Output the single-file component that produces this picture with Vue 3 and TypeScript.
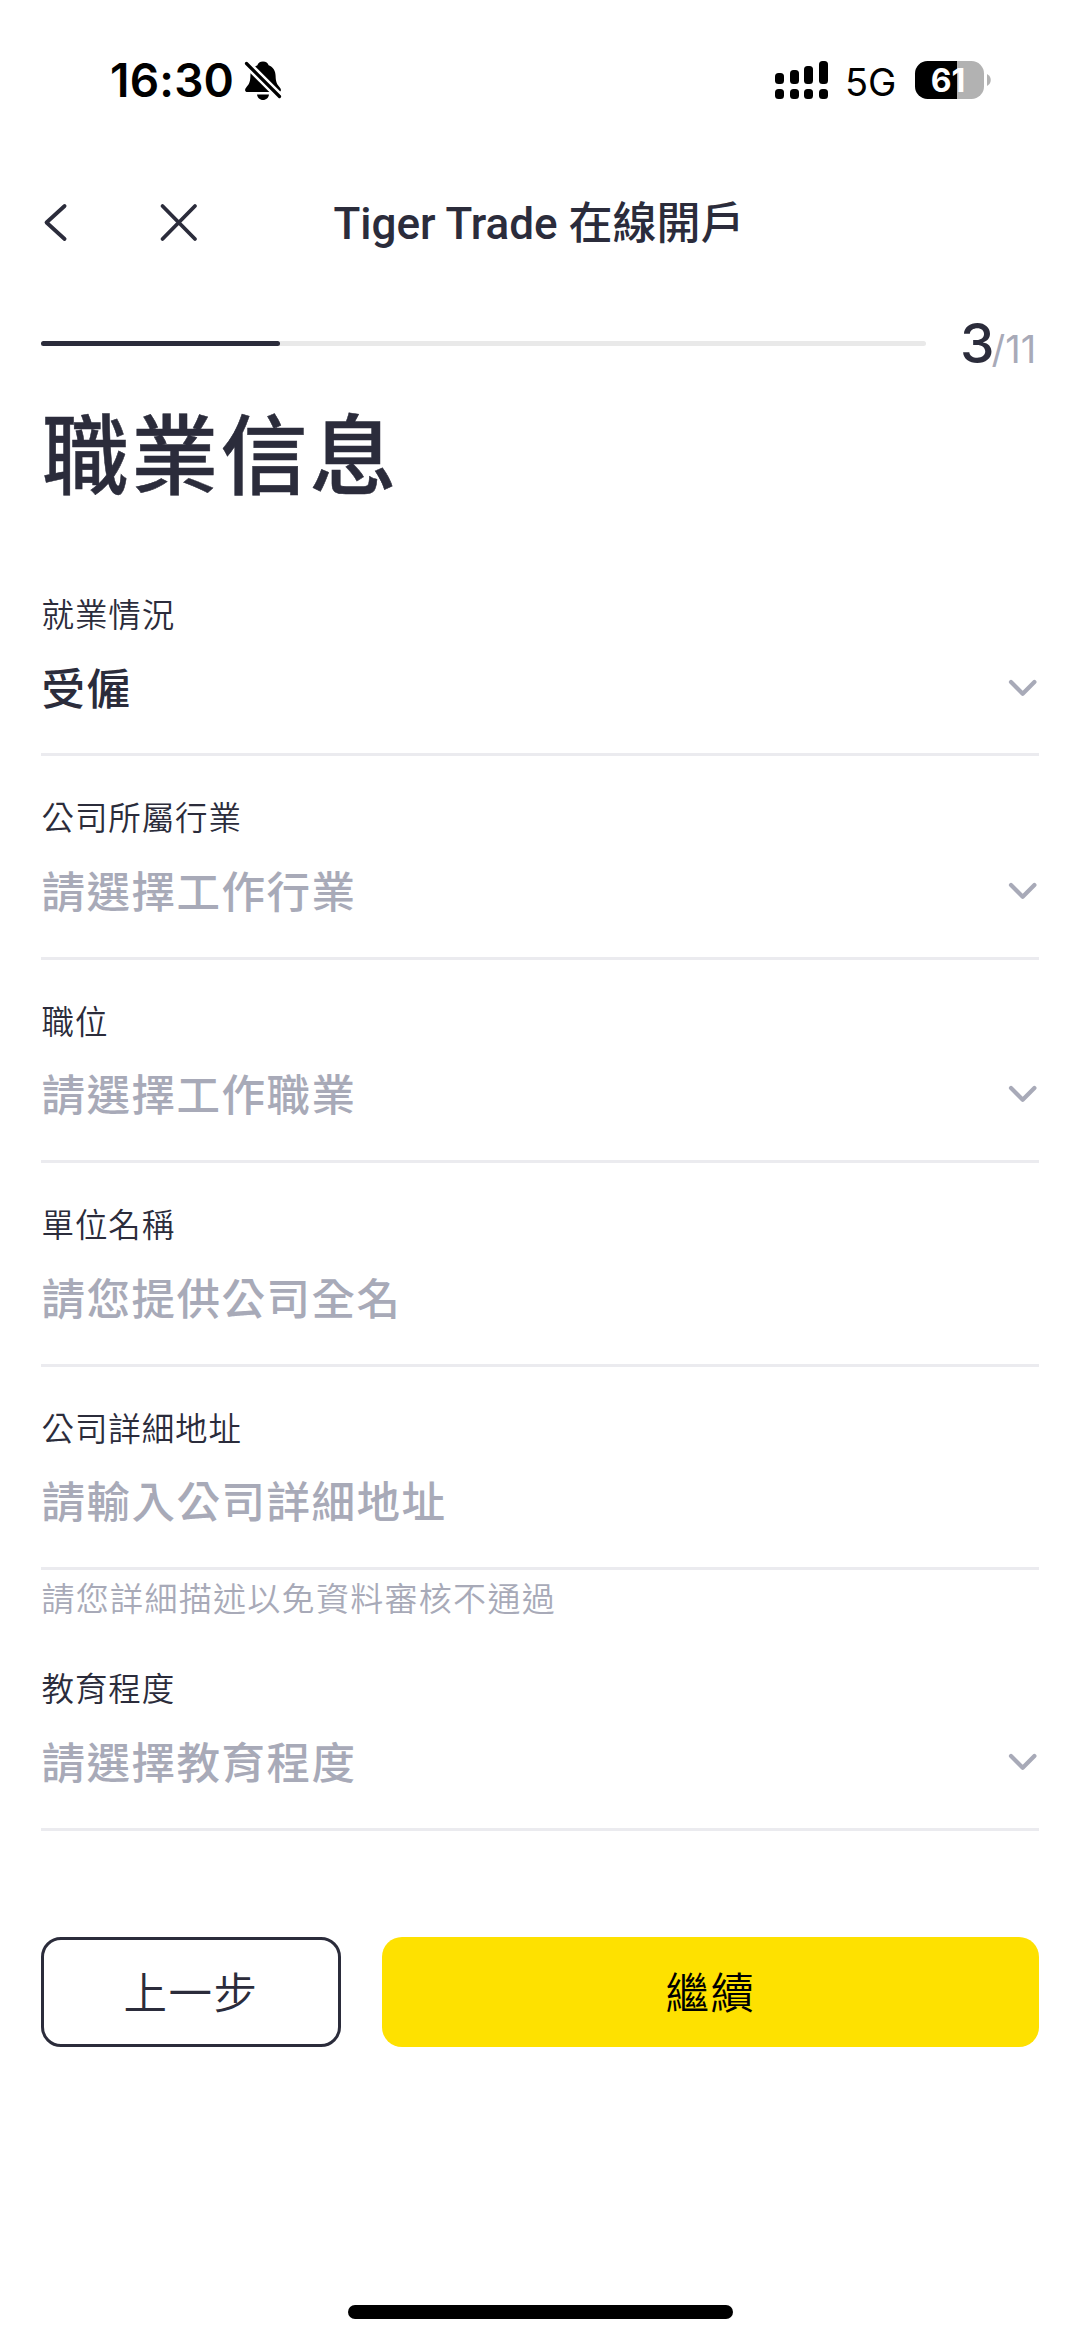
<script setup lang="ts">
import { ref } from 'vue'

interface Field {
  id: string
  label: string
  value: string
  placeholder: string
  select: boolean
  hint?: string
}

const step = ref(3)
const total = 11

const fields = ref<Field[]>([
  { id: 'status', label: '就業情況', value: '受僱', placeholder: '', select: true },
  { id: 'industry', label: '公司所屬行業', value: '', placeholder: '請選擇工作行業', select: true },
  { id: 'position', label: '職位', value: '', placeholder: '請選擇工作職業', select: true },
  { id: 'company', label: '單位名稱', value: '', placeholder: '請您提供公司全名', select: false },
  {
    id: 'address',
    label: '公司詳細地址',
    value: '',
    placeholder: '請輸入公司詳細地址',
    select: false,
    hint: '請您詳細描述以免資料審核不通過',
  },
  { id: 'education', label: '教育程度', value: '', placeholder: '請選擇教育程度', select: true },
])

const signal = [11, 14, 18, 23]
</script>

<template>
  <div class="screen">
    <div class="status">
      <div class="status-left">
        <span class="time">16:30</span>
        <svg class="bell" width="38" height="42" viewBox="0 0 38 42">
          <path
            d="M19 1.500c-3 0-5 1.700-5.600 3.800C8.500 7.300 6.500 11 6.400 16c-.1 6-1.600 8.600-4.200 11.400C.3 29.500.8 32 3.600 32h30.800c2.800 0 3.300-2.500 1.400-4.600C33.200 24.600 31.700 22 31.600 16c-.1-5-2.100-8.700-7-10.700C24 3.200 22 1.500 19 1.500Z"
          />
          <path d="M13 34.500h12c-.5 3.200-2.800 5.500-6 5.500s-5.500-2.300-6-5.500Z" />
          <path d="M0 1 L37 38" stroke="#fff" stroke-width="8" />
          <path d="M2.500 3.500 L35.500 36.500" stroke="#000" stroke-width="3.200" stroke-linecap="round" />
        </svg>
      </div>
      <div class="status-right">
        <div class="signal">
          <div v-for="h in signal" :key="h" class="signal-col">
            <i :style="{ height: h + 'px' }"></i>
            <i class="dot"></i>
          </div>
        </div>
        <span class="network">5G</span>
        <div class="battery"><span>61</span></div>
        <svg class="nub" width="4" height="12" viewBox="0 0 4 12"><path d="M0 0c5 2.500 5 9.500 0 12Z" fill="#b2b2b2" /></svg>
      </div>
    </div>

    <header class="nav">
      <svg width="180" height="44" viewBox="0 0 180 44" class="nav-icons">
        <path d="M24.600 6 L6.500 22.500 L24.600 39" />
        <path d="M122.500 6 L155 39 M155 6 L122.500 39" />
      </svg>
      <h2>Tiger Trade 在線開戶</h2>
    </header>

    <div class="progress">
      <div class="track"><div class="bar" :style="{ width: (step / total) * 99 + '%' }"></div></div>
      <div class="count"><b>{{ step }}</b><span>/{{ total }}</span></div>
    </div>

    <h1>職業信息</h1>

    <form class="form" @submit.prevent>
      <template v-for="f in fields" :key="f.id">
        <div class="field">
          <label>{{ f.label }}</label>
          <div class="row">
            <span class="value" :class="{ empty: !f.value }">{{ f.value || f.placeholder }}</span>
            <svg v-if="f.select" width="30" height="20" viewBox="0 0 30 20">
              <path d="M3 4 L14.700 15.800 L26.400 4" />
            </svg>
          </div>
        </div>
        <p v-if="f.hint" class="hint">{{ f.hint }}</p>
      </template>

      <div class="actions">
        <button type="button" class="prev">上一步</button>
        <button type="submit" class="next">繼續</button>
      </div>
    </form>

    <div class="home"></div>
  </div>
</template>

<style>
body {
  margin: 0;
  background: #fff;
}
</style>

<style scoped>
.screen {
  box-sizing: border-box;
  width: 1080px;
  height: 2341px;
  padding: 0 41px 22px;
  display: flex;
  flex-direction: column;
  background: #fff;
  color: #2b2c3b;
  overflow: hidden;
  font-family: Roboto, 'Noto Sans CJK TC', sans-serif;
}
.status {
  height: 160px;
  display: flex;
  justify-content: space-between;
  align-items: center;
  color: #000;
  font-family: Inter, sans-serif;
}
.status-left {
  display: flex;
  align-items: center;
  padding-left: 69px;
}
.time {
  width: 134px;
  font-size: 46px;
  line-height: 60px;
  font-weight: 600;
  letter-spacing: 0.200px;
  white-space: nowrap;
}
.bell {
  margin-top: 2px;
}
.status-right {
  display: flex;
  align-items: center;
  padding-right: 48px;
}
.signal {
  display: flex;
  align-items: flex-end;
  gap: 5.700px;
  height: 38px;
}
.signal-col {
  display: flex;
  flex-direction: column;
  gap: 5px;
}
.signal-col i {
  display: block;
  width: 9px;
  border-radius: 3.500px;
  background: #000;
}
.signal-col .dot {
  height: 10px;
}
.network {
  width: 70px;
  margin-left: 17px;
  font-size: 38px;
  line-height: 50px;
  margin-top: 3px;
}
.battery {
  box-sizing: border-box;
  width: 69px;
  height: 38px;
  padding-right: 3px;
  border-radius: 12.500px;
  background: linear-gradient(90deg, #000 42px, #b2b2b2 42px);
  color: #fff;
  font-size: 32px;
  font-weight: 700;
  line-height: 39px;
  text-align: center;
}
.nub {
  margin-left: 3px;
}
.nav {
  position: relative;
  height: 126px;
  display: flex;
  justify-content: center;
  align-items: center;
}
.nav-icons {
  position: absolute;
  left: -1px;
  top: 40px;
  fill: none;
  stroke: #2b2c3b;
  stroke-width: 3.800;
  stroke-linecap: round;
  stroke-linejoin: round;
}
.nav h2 {
  margin: 2px 2px 0 0;
  font-size: 44px;
  line-height: 60px;
  font-weight: 500;
  white-space: nowrap;
}
.progress {
  height: 116px;
  display: flex;
  align-items: center;
}
.track {
  width: 885px;
  height: 5px;
  border-radius: 3px;
  background: #e9e9e9;
  margin-bottom: 1px;
}
.bar {
  height: 5px;
  border-radius: 3px;
  background: #2b2c3b;
}
.count {
  margin-left: 34px;
  margin-top: 12px;
  font-family: Inter, sans-serif;
  line-height: 60px;
  white-space: nowrap;
}
.count b {
  font-size: 55px;
  font-weight: 500;
  letter-spacing: -3px;
}
.count span {
  font-size: 38px;
  color: #a8aab8;
}
h1 {
  margin: 9px 0 48px 1px;
  font-size: 87px;
  line-height: 94px;
  font-weight: 500;
  letter-spacing: 2.200px;
  -webkit-text-stroke: 0.500px #2b2c3b;
}
.form {
  display: flex;
  flex-direction: column;
  width: 998px;
}
.field {
  box-sizing: border-box;
  height: 203.400px;
  padding-top: 43px;
  border-bottom: 3px solid #ebebef;
}
label {
  display: block;
  padding-left: 0.500px;
  font-size: 32.500px;
  font-weight: 350;
  line-height: 40px;
  letter-spacing: 0.900px;
}
.row {
  margin-top: 24.500px;
  height: 60px;
  display: flex;
  align-items: center;
  justify-content: space-between;
}
.value {
  padding-left: 0.500px;
  font-size: 43.500px;
  line-height: 60px;
  font-weight: 500;
  letter-spacing: 1.500px;
}
.empty {
  color: #a8aab8;
}
.row svg {
  margin-right: 1.500px;
  margin-top: -6px;
  fill: none;
  stroke: #a8aab8;
  stroke-width: 4.200;
  stroke-linecap: round;
  stroke-linejoin: round;
}
.hint {
  margin: 0;
  padding-left: 0.500px;
  height: 57.500px;
  line-height: 60px;
  font-size: 33px;
  font-weight: 350;
  letter-spacing: 1.300px;
  color: #a8aab8;
}
.actions {
  margin-top: 106.500px;
  display: flex;
  gap: 41px;
}
.actions button {
  box-sizing: border-box;
  height: 110px;
  padding: 6px 0 0;
  border-radius: 20px;
  font-family: inherit;
  font-size: 43.500px;
  font-weight: 350;
  letter-spacing: 1.500px;
  line-height: 60px;
}
.prev {
  width: 300px;
  background: #fff;
  border: 3px solid #2b2c3b;
  color: #2b2c3b;
}
.next {
  flex: 1;
  background: #fee100;
  border: 0;
  color: #000;
}
.home {
  width: 385px;
  height: 14px;
  margin: auto auto 0;
  border-radius: 7px;
  background: #000;
}
</style>
